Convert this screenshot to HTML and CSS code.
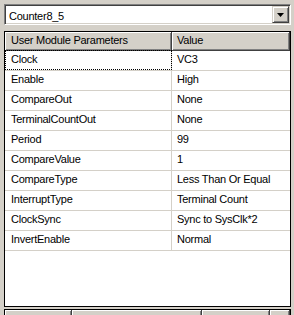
FILE: index.html
```html
<!DOCTYPE html>
<html>
<head>
<meta charset="utf-8">
<link rel="stylesheet" href="styles.css">
</head>
<body>
<div class="combo">
  <span class="combo-text">Counter8_5</span>
  <span class="combo-btn"><svg width="7" height="4" viewBox="0 0 7 4"><path d="M0 0h7L3.5 4z" fill="#000"/></svg></span>
</div>
<div class="grid">
  <div class="head">
    <div class="hc c1">User Module Parameters</div>
    <div class="hc c2">Value</div>
  </div>
  <div class="row"><div class="cell c1 focus">Clock</div><div class="cell c2">VC3</div></div>
  <div class="row"><div class="cell c1">Enable</div><div class="cell c2">High</div></div>
  <div class="row"><div class="cell c1">CompareOut</div><div class="cell c2">None</div></div>
  <div class="row"><div class="cell c1">TerminalCountOut</div><div class="cell c2">None</div></div>
  <div class="row"><div class="cell c1">Period</div><div class="cell c2">99</div></div>
  <div class="row"><div class="cell c1">CompareValue</div><div class="cell c2">1</div></div>
  <div class="row"><div class="cell c1">CompareType</div><div class="cell c2">Less Than Or Equal</div></div>
  <div class="row"><div class="cell c1">InterruptType</div><div class="cell c2">Terminal Count</div></div>
  <div class="row"><div class="cell c1">ClockSync</div><div class="cell c2">Sync to SysClk*2</div></div>
  <div class="row"><div class="cell c1">InvertEnable</div><div class="cell c2">Normal</div></div>
</div>
<div class="bottom">
  <div class="bc w1"></div>
  <div class="bc w2"></div>
  <div class="bc w3"></div>
  <div class="bc w4"></div>
</div>
</body>
</html>
```
FILE: styles.css
```css
html, body {
  margin: 0;
  padding: 0;
}
body {
  background: #d4d0c8;
  font-family: "Liberation Sans", Arial, sans-serif;
  font-size: 11px;
  letter-spacing: -0.25px;
  color: #000;
  width: 294px;
  height: 315px;
  overflow: hidden;
  padding-top: 4px;
  box-sizing: border-box;
}
.combo {
  margin-left: 4px;
  width: 287px;
  height: 21px;
  box-sizing: border-box;
  background: #fff;
  border: 1px solid;
  border-color: #808080 #fff #fff #808080;
  box-shadow: inset 1px 1px #404040, inset -1px -1px #d4d0c8;
  display: flex;
  align-items: center;
}
.combo-text {
  flex: 1;
  padding-left: 4px;
  line-height: 14px;
  padding-top: 2px;
}
.combo-btn {
  width: 17px;
  height: 17px;
  box-sizing: border-box;
  margin-right: 1px;
  background: #d4d0c8;
  border: 1px solid;
  border-color: #d4d0c8 #404040 #404040 #d4d0c8;
  box-shadow: inset 1px 1px #fff, inset -1px -1px #808080;
  display: flex;
  align-items: center;
  justify-content: center;
}
.combo-btn svg {
  display: block;
}
.grid {
  margin-top: 6px;
  margin-left: 4px;
  width: 287px;
  height: 276px;
  box-sizing: border-box;
  border: 1px solid #000;
  background: #fff;
  display: flex;
  flex-direction: column;
}
.head {
  display: flex;
  height: 19px;
  flex: none;
}
.hc {
  box-sizing: border-box;
  background: #d4d0c8;
  height: 19px;
  line-height: 17px;
  border-right: 1px solid #404040;
  border-bottom: 1px solid #404040;
  box-shadow: inset 1px 1px #fff, inset -1px -1px #808080;
}
.c1 {
  width: 167px;
  flex: none;
  padding-left: 6px;
  box-sizing: border-box;
}
.c2 {
  flex: 1;
  padding-left: 5px;
}
.row {
  display: flex;
  height: 20px;
  flex: none;
  box-sizing: border-box;
  border-bottom: 1px solid #d4d0c8;
}
.cell {
  box-sizing: border-box;
  height: 19px;
  line-height: 16px;
}
.cell.c1 {
  border-right: 1px solid #d4d0c8;
}
.focus {
  position: relative;
}
.focus::after {
  content: "";
  position: absolute;
  left: 0;
  top: -1px;
  right: -1px;
  bottom: 0;
  border: 1px dotted #000;
}
.bottom {
  margin-top: 2px;
  margin-left: 4px;
  width: 287px;
  height: 10px;
  box-sizing: border-box;
  border: 1px solid #000;
  border-bottom: none;
  display: flex;
  background: #d4d0c8;
}
.bc {
  box-sizing: border-box;
  height: 100%;
  border-right: 1px solid #404040;
  box-shadow: inset 1px 1px #fff, inset -1px 0 #808080;
}
.w1 { width: 67px; }
.w2 { width: 130px; }
.w3 { width: 68px; }
.w4 { flex: 1; }
```
